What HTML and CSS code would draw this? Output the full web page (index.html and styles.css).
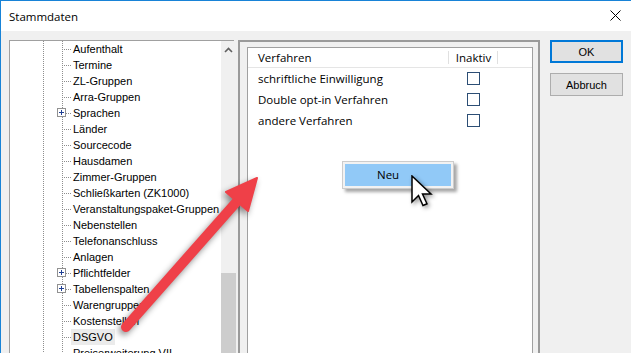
FILE: index.html
```html
<!DOCTYPE html>
<html lang="de">
<head>
  <meta charset="utf-8">
  <title>Stammdaten</title>
  <link rel="stylesheet" href="styles.css">
</head>
<body>
<div class="window">
  <div class="titlebar">
    <span class="title">Stammdaten</span>
    <svg class="close" width="11" height="11" viewBox="0 0 11 11"><path d="M0.5 0.5 L10.5 10.5 M10.5 0.5 L0.5 10.5" stroke="#000" stroke-width="1" fill="none"/></svg>
  </div>

  <div class="content">
    <div class="tree">
      <div class="tree-items">
        <div class="node"><span class="connector"></span><span class="label">Aufenthalt</span></div>
        <div class="node"><span class="connector"></span><span class="label">Termine</span></div>
        <div class="node"><span class="connector"></span><span class="label">ZL-Gruppen</span></div>
        <div class="node"><span class="connector"></span><span class="label">Arra-Gruppen</span></div>
        <div class="node"><span class="plus"></span><span class="connector"></span><span class="label">Sprachen</span></div>
        <div class="node"><span class="connector"></span><span class="label">Länder</span></div>
        <div class="node"><span class="connector"></span><span class="label">Sourcecode</span></div>
        <div class="node"><span class="connector"></span><span class="label">Hausdamen</span></div>
        <div class="node"><span class="connector"></span><span class="label">Zimmer-Gruppen</span></div>
        <div class="node"><span class="connector"></span><span class="label">Schließkarten (ZK1000)</span></div>
        <div class="node"><span class="connector"></span><span class="label">Veranstaltungspaket-Gruppen</span></div>
        <div class="node"><span class="connector"></span><span class="label">Nebenstellen</span></div>
        <div class="node"><span class="connector"></span><span class="label">Telefonanschluss</span></div>
        <div class="node"><span class="connector"></span><span class="label">Anlagen</span></div>
        <div class="node"><span class="plus"></span><span class="connector"></span><span class="label">Pflichtfelder</span></div>
        <div class="node"><span class="plus"></span><span class="connector"></span><span class="label">Tabellenspalten</span></div>
        <div class="node"><span class="connector"></span><span class="label">Warengruppen</span></div>
        <div class="node"><span class="connector"></span><span class="label">Kostenstellen</span></div>
        <div class="node"><span class="connector"></span><span class="label selected">DSGVO</span></div>
        <div class="node"><span class="connector"></span><span class="label">Preiserweiterung VII</span></div>
      </div>
      <div class="scrollbar">
        <div class="scroll-up">
          <svg width="9" height="6" viewBox="0 0 9 6"><path d="M1 5 L4.5 1.5 L8 5" stroke="#606060" stroke-width="1.6" fill="none"/></svg>
        </div>
        <div class="track"></div>
        <div class="thumb"></div>
      </div>
    </div>

    <div class="panel">
      <div class="list">
        <div class="list-head">
          <div class="col-name">Verfahren</div>
          <div class="col-flag">Inaktiv</div>
        </div>
        <div class="row"><div class="col-name">schriftliche Einwilligung</div><div class="col-flag"><span class="check"></span></div></div>
        <div class="row"><div class="col-name">Double opt-in Verfahren</div><div class="col-flag"><span class="check"></span></div></div>
        <div class="row"><div class="col-name">andere Verfahren</div><div class="col-flag"><span class="check"></span></div></div>
      </div>
    </div>

    <div class="buttons">
      <button class="btn default">OK</button>
      <button class="btn">Abbruch</button>
    </div>
  </div>

  <div class="menu">
    <div class="menu-item">Neu</div>
  </div>

  <svg class="cursor" width="24" height="34" viewBox="0 0 24 34">
    <polygon points="1,1 1,27 7.5,20.5 12,30.5 16,28.8 11.5,19 20,19" fill="#fff" stroke="#000" stroke-width="1.5" stroke-linejoin="miter"/>
  </svg>

  <svg class="callout" width="631" height="353" viewBox="0 0 631 353">
    <g fill="#ef4048" stroke="#ef4048">
      <line x1="126" y1="327" x2="240" y2="198" stroke-width="10" stroke-linecap="round"/>
      <polygon points="257,178 226,192 248,211" stroke-width="2" stroke-linejoin="round"/>
    </g>
  </svg>
</div>
</body>
</html>
```

FILE: styles.css
```css
html, body {
  margin: 0;
  padding: 0;
  height: 353px;
  overflow: hidden;
}
body {
  font-family: "Liberation Sans", Arial, sans-serif;
  font-size: 11px;
  color: #000;
  background-color: #f0f0f0;
}

.window {
  position: relative;
  height: 352px;
  border-top: 1px solid #1883d7;
  border-left: 1px solid #1883d7;
  background-color: #f0f0f0;
  overflow: hidden;
}

.titlebar {
  height: 30px;
  background-color: #fff;
  display: flex;
  align-items: center;
  justify-content: space-between;
  padding: 0 10px 0 8px;
}
.title {
  font-family: "Open Sans", sans-serif;
  font-size: 11.5px;
}
.close {
  display: block;
  margin-top: -1px;
}

.content {
  display: flex;
  align-items: flex-start;
  padding: 9px 0 0 8px;
}

/* tree on the left */
.tree {
  width: 225px;
  height: 330px;
  box-sizing: border-box;
  flex: none;
  display: flex;
  border: 1px solid #a0a0a0;
  border-bottom: 0;
  padding-right: 2px;
  background-color: #fff;
}
.tree-items {
  flex: 1;
  background-image:
    repeating-linear-gradient(to bottom, #8e8e8e 0 1px, transparent 1px 2px),
    repeating-linear-gradient(to bottom, #8e8e8e 0 1px, transparent 1px 2px);
  background-size: 1px 100%, 1px 100%;
  background-position: 33px 0, 52px 0;
  background-repeat: no-repeat;
  white-space: nowrap;
}
.node {
  position: relative;
  display: flex;
  align-items: center;
  height: 16px;
  padding-left: 52px;
}
.connector {
  width: 9px;
  height: 1px;
  flex: none;
  background-image: repeating-linear-gradient(to right, #8e8e8e 0 1px, transparent 1px 2px);
}
.plus {
  position: absolute;
  left: 47px;
  top: 3px;
  width: 9px;
  height: 9px;
  box-sizing: border-box;
  border: 1px solid #919191;
  background:
    linear-gradient(#1f3f93, #1f3f93) center / 5px 1px no-repeat,
    linear-gradient(#1f3f93, #1f3f93) center / 1px 5px no-repeat,
    #fff;
}
.label {
  padding: 0 2px;
  line-height: 16px;
}
.label.selected {
  background-color: #ebebeb;
}

.scrollbar {
  width: 15px;
  flex: none;
  display: flex;
  flex-direction: column;
  background-color: #f0f0f0;
}
.scroll-up {
  height: 17px;
  display: flex;
  align-items: center;
  justify-content: center;
}
.track {
  height: 215px;
}
.thumb {
  flex: 1;
  background-color: #cdcdcd;
}

/* middle panel */
.panel {
  width: 302px;
  height: 330px;
  box-sizing: border-box;
  flex: none;
  margin-left: 4px;
  border: 2px solid #9a9a9a;
  border-bottom: 0;
  padding: 5px 5px 0 7px;
}
.list {
  height: 100%;
  border: 1px solid #a0a0a0;
  border-bottom: 0;
  background-color: #fff;
  font-family: "Open Sans", sans-serif;
  font-size: 11.5px;
}
.list-head,
.row {
  display: flex;
  align-items: center;
}
.list-head {
  height: 19px;
  border-bottom: 1px solid #e5e5e5;
}
.row {
  height: 21px;
}
.col-name {
  width: 201px;
  box-sizing: border-box;
  padding-left: 10px;
  flex: none;
}
.col-flag {
  width: 49px;
  flex: none;
  display: flex;
  justify-content: center;
  align-items: center;
}
.list-head .col-name,
.list-head .col-flag {
  position: relative;
  height: 19px;
  line-height: 19px;
}
.list-head .col-name::after,
.list-head .col-flag::after {
  content: "";
  position: absolute;
  right: 0;
  top: 3px;
  width: 1px;
  height: 13px;
  background-color: #e0e0e0;
}
.check {
  width: 13px;
  height: 13px;
  box-sizing: border-box;
  border: 1px solid #2c4e75;
  background-color: #fff;
}

/* buttons on the right */
.buttons {
  display: flex;
  flex-direction: column;
  gap: 10px;
  margin-left: 10px;
}
.btn {
  width: 73px;
  height: 23px;
  box-sizing: border-box;
  border: 1px solid #adadad;
  background-color: #e1e1e1;
  font-family: "Liberation Sans", Arial, sans-serif;
  font-size: 11px;
  color: #000;
  padding: 0;
}
.btn.default {
  border: 2px solid #0078d7;
}

/* context menu + cursor + annotation arrow */
.menu {
  position: absolute;
  left: 341px;
  top: 160px;
  width: 112px;
  box-sizing: border-box;
  border: 1px solid #cccccc;
  padding: 2px;
  background-color: #f2f2f2;
  box-shadow: 3px 3px 3px rgba(0, 0, 0, 0.35);
}
.menu-item {
  height: 22px;
  line-height: 22px;
  padding-left: 32px;
  background-color: #91c9f7;
  font-family: "Open Sans", sans-serif;
  font-size: 11.5px;
}
.cursor {
  position: absolute;
  left: 410px;
  top: 174px;
  filter: drop-shadow(2px 2px 2px rgba(0, 0, 0, 0.4));
}
.callout {
  position: absolute;
  left: -1px;
  top: -1px;
  filter: drop-shadow(-2px 3px 3px rgba(0, 0, 0, 0.45));
}
```
